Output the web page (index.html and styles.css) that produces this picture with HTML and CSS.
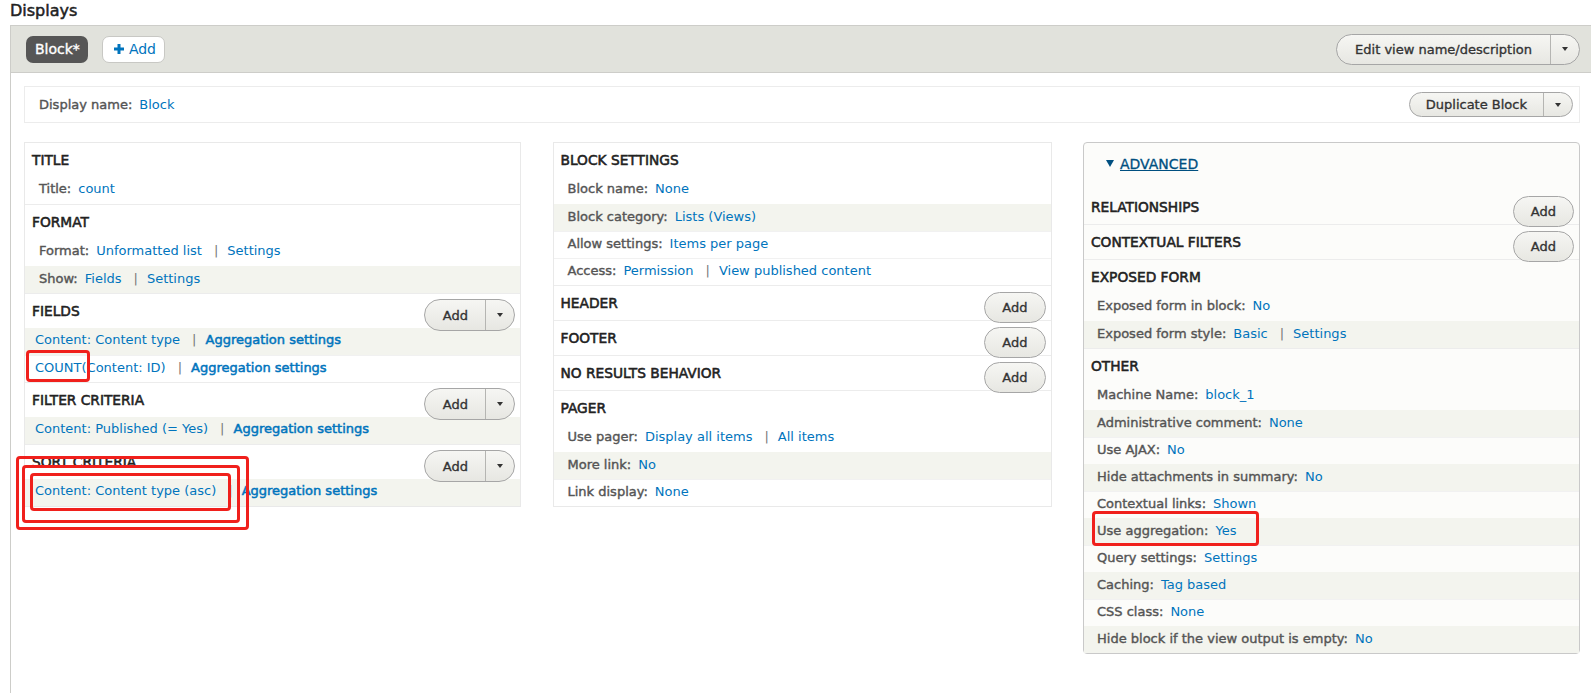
FILE: index.html
```html
<!DOCTYPE html>
<html lang="en">
<head>
<meta charset="utf-8">
<title>Displays</title>
<link rel="stylesheet" href="styles.css">
</head>
<body>
<div class="page">
  <h2 class="page-title">Displays</h2>
  <div class="display-bar">
    <div class="tabs">
      <a class="tab tab-active">Block*</a>
      <a class="tab tab-add"><svg class="plus" width="10" height="10" viewBox="0 0 10 10"><path d="M5 0V10M0 5H10" stroke="#0074bd" stroke-width="3"/></svg>Add</a>
    </div>
    <div class="split split-lg"><span class="split-main">Edit view name/description</span><span class="split-caret"><i class="caret"></i></span></div>
  </div>
  <div class="display-body">
    <div class="name-box">
      <div class="name-setting"><span class="label">Display name:</span><a class="link">Block</a></div>
      <div class="split split-sm"><span class="split-main">Duplicate Block</span><span class="split-caret"><i class="caret"></i></span></div>
    </div>
    <div class="columns">
      <div class="column">
        <section class="bucket">
          <div class="bucket-head"><h3>TITLE</h3></div>
          <div class="row"><span class="label">Title:</span><a class="link">count</a></div>
        </section>
        <section class="bucket">
          <div class="bucket-head"><h3>FORMAT</h3></div>
          <div class="row"><span class="label">Format:</span><a class="link">Unformatted list</a><span class="sep">|</span><a class="link">Settings</a></div>
          <div class="row shade"><span class="label">Show:</span><a class="link">Fields</a><span class="sep">|</span><a class="link">Settings</a></div>
        </section>
        <section class="bucket">
          <div class="bucket-head"><h3>FIELDS</h3><div class="split split-add"><span class="split-main">Add</span><span class="split-caret"><i class="caret"></i></span></div></div>
          <div class="row row-field shade"><a class="link">Content: Content type</a><span class="sep">|</span><a class="link strong">Aggregation settings</a></div>
          <div class="row row-field"><a class="link">COUNT(Content: ID)</a><span class="sep">|</span><a class="link strong">Aggregation settings</a></div>
        </section>
        <section class="bucket">
          <div class="bucket-head"><h3>FILTER CRITERIA</h3><div class="split split-add"><span class="split-main">Add</span><span class="split-caret"><i class="caret"></i></span></div></div>
          <div class="row row-field shade"><a class="link">Content: Published (= Yes)</a><span class="sep">|</span><a class="link strong">Aggregation settings</a></div>
        </section>
        <section class="bucket">
          <div class="bucket-head"><h3>SORT CRITERIA</h3><div class="split split-add"><span class="split-main">Add</span><span class="split-caret"><i class="caret"></i></span></div></div>
          <div class="row row-field shade"><a class="link">Content: Content type (asc)</a><span class="sep">|</span><a class="link strong">Aggregation settings</a></div>
        </section>
      </div>

      <div class="column">
        <section class="bucket">
          <div class="bucket-head"><h3>BLOCK SETTINGS</h3></div>
          <div class="row"><span class="label">Block name:</span><a class="link">None</a></div>
          <div class="row shade"><span class="label">Block category:</span><a class="link">Lists (Views)</a></div>
          <div class="row"><span class="label">Allow settings:</span><a class="link">Items per page</a></div>
          <div class="row"><span class="label">Access:</span><a class="link">Permission</a><span class="sep">|</span><a class="link">View published content</a></div>
        </section>
        <section class="bucket">
          <div class="bucket-head"><h3>HEADER</h3><a class="btn btn-add">Add</a></div>
        </section>
        <section class="bucket">
          <div class="bucket-head"><h3>FOOTER</h3><a class="btn btn-add">Add</a></div>
        </section>
        <section class="bucket">
          <div class="bucket-head"><h3>NO RESULTS BEHAVIOR</h3><a class="btn btn-add">Add</a></div>
        </section>
        <section class="bucket">
          <div class="bucket-head"><h3>PAGER</h3></div>
          <div class="row"><span class="label">Use pager:</span><a class="link">Display all items</a><span class="sep">|</span><a class="link">All items</a></div>
          <div class="row shade"><span class="label">More link:</span><a class="link">No</a></div>
          <div class="row"><span class="label">Link display:</span><a class="link">None</a></div>
        </section>
      </div>

      <div class="column column-advanced">
        <div class="advanced"><svg class="tri" width="8" height="7" viewBox="0 0 8 7"><path d="M0 0H8L4 7Z" fill="#004f80"/></svg><a class="advanced-link">ADVANCED</a></div>
        <section class="bucket">
          <div class="bucket-head"><h3>RELATIONSHIPS</h3><a class="btn btn-add">Add</a></div>
        </section>
        <section class="bucket">
          <div class="bucket-head"><h3>CONTEXTUAL FILTERS</h3><a class="btn btn-add">Add</a></div>
        </section>
        <section class="bucket">
          <div class="bucket-head"><h3>EXPOSED FORM</h3></div>
          <div class="row"><span class="label">Exposed form in block:</span><a class="link">No</a></div>
          <div class="row shade"><span class="label">Exposed form style:</span><a class="link">Basic</a><span class="sep">|</span><a class="link">Settings</a></div>
        </section>
        <section class="bucket">
          <div class="bucket-head"><h3>OTHER</h3></div>
          <div class="row"><span class="label">Machine Name:</span><a class="link">block_1</a></div>
          <div class="row shade"><span class="label">Administrative comment:</span><a class="link">None</a></div>
          <div class="row"><span class="label">Use AJAX:</span><a class="link">No</a></div>
          <div class="row shade"><span class="label">Hide attachments in summary:</span><a class="link">No</a></div>
          <div class="row"><span class="label">Contextual links:</span><a class="link">Shown</a></div>
          <div class="row shade"><span class="label">Use aggregation:</span><a class="link">Yes</a></div>
          <div class="row"><span class="label">Query settings:</span><a class="link">Settings</a></div>
          <div class="row shade"><span class="label">Caching:</span><a class="link">Tag based</a></div>
          <div class="row"><span class="label">CSS class:</span><a class="link">None</a></div>
          <div class="row shade"><span class="label">Hide block if the view output is empty:</span><a class="link">No</a></div>
        </section>
      </div>
    </div>
  </div>

  <div class="mark mark-count"></div>
  <div class="mark mark-sort-1"></div>
  <div class="mark mark-sort-2"></div>
  <div class="mark mark-sort-3"></div>
  <div class="mark mark-agg"></div>
</div>
</body>
</html>
```

FILE: styles.css
```css
* { box-sizing: border-box; }
html, body { margin: 0; padding: 0; overflow: hidden; background: #fff; }
body {
  font-family: "DejaVu Sans", "Lucida Grande", sans-serif;
  font-size: 13px;
  color: #333;
}
.page { position: relative; padding-left: 10px; height: 693px; }

.page-title {
  margin: 0;
  padding-top: 1px;
  height: 25px;
  font-size: 16px;
  line-height: 20px;
  font-weight: normal;
  color: #222;
  -webkit-text-stroke: 0.5px;
}

.display-bar {
  display: flex;
  align-items: center;
  justify-content: space-between;
  height: 48px;
  background: #e1e2dc;
  border: 1px solid #cdcdc9;
  border-right: 0;
  padding: 0 11px 0 15px;
}
.tabs { display: flex; gap: 14px; }
.tab {
  display: inline-flex;
  align-items: center;
  height: 27px;
  border-radius: 7px;
  font-size: 14px;
}
.tab-active {
  background: #565656;
  color: #fff;
  padding: 0 8px 0 9px;
  -webkit-text-stroke: 0.35px;
}
.tab-add {
  background: #fff;
  border: 1px solid #c8c8c4;
  color: #0074bd;
  padding: 0 8px 0 11px;
}
.plus { margin-right: 5px; }

.split {
  display: inline-flex;
  height: 31px;
  border: 1px solid #a6a6a6;
  border-radius: 20px;
  background: linear-gradient(#f6f6f3, #e7e7e2);
  color: #333;
  overflow: hidden;
  flex: none;
}
.split-main {
  display: flex;
  align-items: center;
  padding: 0 18px 0 18px;
  border-right: 1px solid #b5b5b2;
  -webkit-text-stroke: 0.35px;
  text-shadow: 0 1px rgba(255, 255, 255, 0.6);
}
.split-caret {
  width: 28px;
  display: flex;
  align-items: center;
  justify-content: center;
}
.caret {
  width: 0;
  height: 0;
  border-left: 3.5px solid transparent;
  border-right: 3.5px solid transparent;
  border-top: 4px solid #333;
}
.split-sm { height: 25px; }
.split-sm .split-main { padding: 0 16px; }
.split-add { margin-top: 5px; margin-right: 0; height: 32px; }
.split-add .split-main { padding: 0 17px 0 18px; }
.split-add .split-caret { width: 28px; }

.btn {
  display: inline-flex;
  align-items: center;
  flex: none;
  height: 31px;
  border: 1px solid #a6a6a6;
  border-radius: 20px;
  background: linear-gradient(#f6f6f3, #e7e7e2);
  color: #333;
  -webkit-text-stroke: 0.35px;
  text-shadow: 0 1px rgba(255, 255, 255, 0.6);
}
.btn-add { padding: 0 17px; margin-top: 6px; }

.display-body {
  border-left: 1px solid #cdcdc9;
  padding: 13px 11px 0 13px;
  height: 620px;
}
.name-box {
  display: flex;
  align-items: center;
  justify-content: space-between;
  height: 37px;
  border: 1px solid #ececec;
  padding: 0 6px 0 14px;
}
.name-setting { display: flex; align-items: center; }

.label {
  color: #555;
  -webkit-text-stroke: 0.4px;
  margin-right: 7px;
}
.link { color: #0074bd; text-decoration: none; }
.link.strong { -webkit-text-stroke: 0.5px; }
.sep { color: #777; margin: 0 9px 0 12px; }

.columns {
  margin-top: 19px;
  display: grid;
  grid-template-columns: 497fr 499fr 497fr;
  column-gap: 31.5px;
  align-items: start;
}
.column { border: 1px solid #e9e9e9; background: #fff; }
.column-advanced {
  border-color: #c9c9c9;
  border-radius: 4px;
  background: #fcfcfa;
}

.bucket { border-bottom: 1px solid #ececec; }
.bucket:last-child { border-bottom: 0; }
.bucket-head {
  display: flex;
  justify-content: space-between;
  align-items: flex-start;
  height: 34px;
  padding: 0 5px 0 7px;
}
.bucket-head h3 {
  margin: 0;
  font-size: 13.75px;
  line-height: 34px;
  font-weight: normal;
  color: #222;
  -webkit-text-stroke: 0.55px;
}

.row {
  display: flex;
  align-items: center;
  height: 27px;
  padding-left: 14px;
  padding-bottom: 4px;
  white-space: nowrap;
}
.row + .row { border-top: 1px solid #f1f1f1; }
.row.shade { background: #f3f4ee; border-top-color: #f3f4ee; }
.row-field { padding-left: 10px; }
.column-advanced .row { padding-left: 13px; }

.advanced {
  display: flex;
  align-items: center;
  height: 47px;
  padding: 0 0 6px 22px;
}
.tri { margin-right: 6px; }
.advanced-link {
  color: #004f80;
  font-size: 14px;
  text-decoration: underline;
  -webkit-text-stroke: 0.3px;
}

.mark {
  position: absolute;
  border: 3px solid #f0201c;
  border-radius: 4px;
}
.mark-count { left: 26px; top: 350px; width: 64px; height: 32px; }
.mark-sort-1 { left: 16px; top: 456px; width: 233px; height: 74px; }
.mark-sort-2 { left: 22px; top: 465px; width: 218px; height: 58px; }
.mark-sort-3 { left: 30px; top: 473px; width: 201px; height: 38px; }
.mark-agg { left: 1092px; top: 511px; width: 167px; height: 35px; }
```
